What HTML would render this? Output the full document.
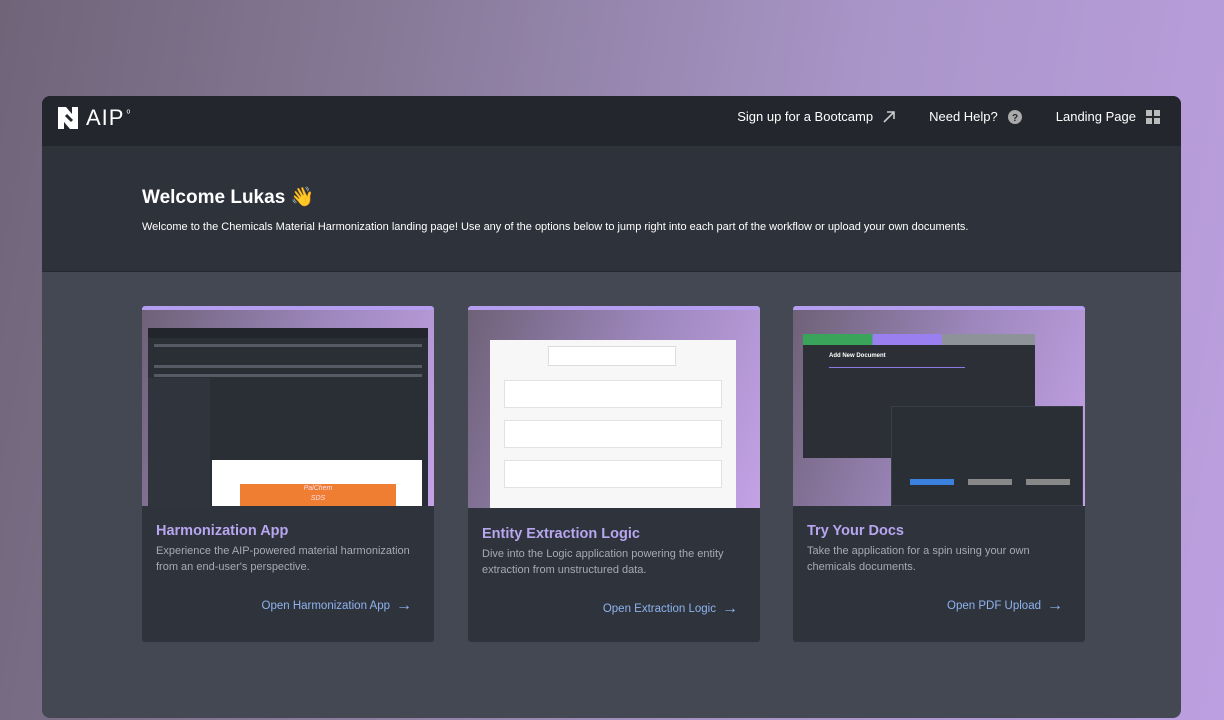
<!DOCTYPE html>
<html><head><meta charset="utf-8"><style>
*{box-sizing:border-box;margin:0;padding:0}
body{width:1224px;height:720px;overflow:hidden;font-family:"Liberation Sans",sans-serif;background:linear-gradient(100deg,#6f6478 0%,#877a98 30%,#a995c8 65%,#bc9fe0 100%);position:relative}
.panel{position:absolute;left:42px;top:96px;width:1139px;height:622px;border-radius:8px;overflow:hidden;background:#434852}
.hdr{height:50px;background:#23262d;position:relative}
.logo{position:absolute;left:16px;top:9px;color:#fff;font-size:22px;letter-spacing:1px;display:flex;align-items:center;gap:6px}
.nav{position:absolute;right:0;top:0;height:41px;display:flex;align-items:center;color:#fff;font-size:13px}
.nav span{display:flex;align-items:center;gap:10px;margin-right:34px}
.nav span:last-child{margin-right:21px}
.wel{height:126px;background:#2e323a;border-bottom:1px solid #262930;padding:39px 0 0 100px;color:#fff}
.wel h1{font-size:19px;font-weight:bold;margin-bottom:12px}
.wel p{font-size:11px}
.card{position:absolute;top:210px;width:292px;height:336px;background:#2f333c;border-radius:3px;overflow:hidden}
.bar{height:4px;background:#b59ef0}
.img{height:196px;background:linear-gradient(110deg,#6e6177 0%,#9c86bb 50%,#c3a2e6 100%);position:relative;overflow:hidden}
.t{position:absolute;left:14px;font-size:14.5px;font-weight:bold;color:#b8a6f0}
.d{position:absolute;left:14px;font-size:11px;line-height:15.5px;color:#a6aab2;width:270px}
.l{position:absolute;right:22px;font-size:11.5px;color:#8eb3ee;display:flex;align-items:center;gap:6px}
.l b{font-size:16px;line-height:12px}
.row{height:3px;background:#555a64;margin:6px 6px}
</style></head><body>
<div class="panel">
 <div class="hdr">
  <div class="logo"><svg width="22" height="22" viewBox="0 0 22 22"><path d="M0 0h8l6 7V0h6v22h-8l-6-7v7H0z" fill="#fff"/><path d="M8 8l6 6" stroke="#23262d" stroke-width="3"/></svg><span style="font-weight:300">AIP</span><sup style="font-size:10px;margin-left:-4px;margin-top:-10px">ᵒ</sup></div>
  <div class="nav">
   <span>Sign up for a Bootcamp <svg width="12" height="12" viewBox="0 0 12 12"><path d="M1 11L11 1M4 1h7v7" stroke="#ccc" stroke-width="1.6" fill="none"/></svg></span>
   <span>Need Help? <svg width="14" height="14"><circle cx="7" cy="7" r="7" fill="#aaa"/><text x="7" y="11" font-size="10" font-weight="bold" text-anchor="middle" fill="#23262d" font-family="Liberation Sans">?</text></svg></span>
   <span>Landing Page <svg width="14" height="14"><rect width="6" height="6" fill="#bbb"/><rect x="8" width="6" height="6" fill="#bbb"/><rect y="8" width="6" height="6" fill="#bbb"/><rect x="8" y="8" width="6" height="6" fill="#bbb"/></svg></span>
  </div>
 </div>
 <div class="wel"><h1>Welcome Lukas 👋</h1><p>Welcome to the Chemicals Material Harmonization landing page! Use any of the options below to jump right into each part of the workflow or upload your own documents.</p></div>

 <div class="card" style="left:100px">
  <div class="bar"></div>
  <div class="img">
   <div style="position:absolute;left:6px;top:18px;width:280px;height:180px;background:#2a2e35">
    <div style="height:10px;background:#22252b"></div>
    <div class="row"></div><div class="row" style="margin-top:18px"></div><div class="row"></div>
    <div style="position:absolute;left:0;top:50px;width:62px;height:128px;background:#30343c"></div>
   </div>
   <div style="position:absolute;left:70px;top:150px;width:210px;height:50px;background:#fff"><div style="margin:24px 0 0 28px;width:156px;height:22px;background:#ef7e32;color:#fde;font-size:7px;text-align:center;font-style:italic;line-height:10px">PalChem<br>SDS</div></div>
  </div>
  <div class="t" style="top:217px">Harmonization App</div>
  <div class="d" style="top:238px">Experience the AIP-powered material harmonization from an end-user's perspective.</div>
  <div class="l" style="top:294px">Open Harmonization App <b>→</b></div>
 </div>

 <div class="card" style="left:426px">
  <div class="bar"></div>
  <div class="img" style="height:198px">
   <div style="position:absolute;left:22px;top:30px;width:246px;height:170px;background:#f7f7f8">
    <div style="margin:6px 0 0 58px;width:128px;height:20px;background:#fff;border:1px solid #ddd"></div>
    <div style="margin:14px 14px 0;height:28px;background:#fff;border:1px solid #e2e2e2"></div>
    <div style="margin:12px 14px 0;height:28px;background:#fff;border:1px solid #e2e2e2"></div>
    <div style="margin:12px 14px 0;height:28px;background:#fff;border:1px solid #e2e2e2"></div>
   </div>
  </div>
  <div class="t" style="top:220px">Entity Extraction Logic</div>
  <div class="d" style="top:241px">Dive into the Logic application powering the entity extraction from unstructured data.</div>
  <div class="l" style="top:297px">Open Extraction Logic <b>→</b></div>
 </div>

 <div class="card" style="left:751px">
  <div class="bar"></div>
  <div class="img">
   <div style="position:absolute;left:10px;top:24px;width:232px;height:124px;background:#2c3036">
    <div style="height:11px;background:linear-gradient(90deg,#3aa55a 0 30%,#9a7ff0 30% 60%,#8e9299 60%)"></div>
    <div style="color:#fff;font-size:6px;font-weight:bold;margin:8px 0 0 26px">Add New Document</div>
    <div style="margin:8px 70px 0 26px;height:1px;background:#8c7ae0"></div>
   </div>
   <div style="position:absolute;left:98px;top:96px;width:192px;height:100px;background:#2a2e35;border:1px solid #3a3e46">
    <div style="position:absolute;left:18px;top:72px;width:44px;height:6px;background:#3b82e0"></div>
    <div style="position:absolute;left:76px;top:72px;width:44px;height:6px;background:#888"></div>
    <div style="position:absolute;left:134px;top:72px;width:44px;height:6px;background:#888"></div>
   </div>
  </div>
  <div class="t" style="top:217px">Try Your Docs</div>
  <div class="d" style="top:238px">Take the application for a spin using your own chemicals documents.</div>
  <div class="l" style="top:294px">Open PDF Upload <b>→</b></div>
 </div>
</div>
</body></html>
